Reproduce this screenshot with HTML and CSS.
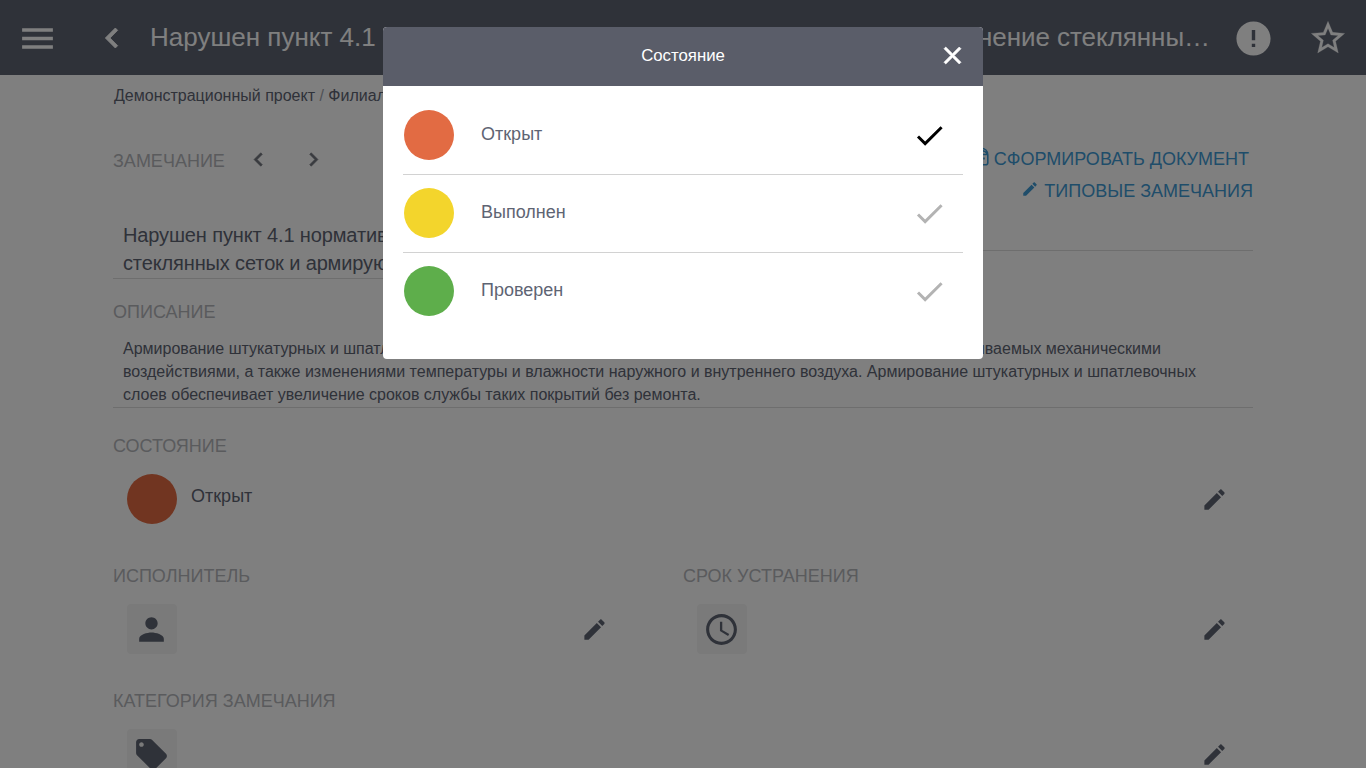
FILE: index.html
```html
<!DOCTYPE html>
<html lang="ru">
<head>
<meta charset="utf-8">
<title>Замечание</title>
<link rel="stylesheet" href="styles.css">
</head>
<body>
<svg class="sprite" aria-hidden="true">
  <symbol id="i-menu" viewBox="0 0 24 24"><path d="M3 18h18v-2H3v2zm0-5h18v-2H3v2zm0-7v2h18V6H3z"/></symbol>
  <symbol id="i-left" viewBox="0 0 24 24"><path d="M15.41 7.41L14 6l-6 6 6 6 1.41-1.41L10.83 12z"/></symbol>
  <symbol id="i-right" viewBox="0 0 24 24"><path d="M10 6L8.59 7.41 13.17 12l-4.58 4.59L10 18l6-6z"/></symbol>
  <symbol id="i-error" viewBox="0 0 24 24"><path d="M12 2C6.48 2 2 6.48 2 12s4.48 10 10 10 10-4.48 10-10S17.52 2 12 2zm1 15h-2v-2h2v2zm0-4h-2V7h2v6z"/></symbol>
  <symbol id="i-star" viewBox="0 0 24 24"><path d="M22 9.24l-7.19-.62L12 2 9.19 8.63 2 9.24l5.46 4.73L5.82 21 12 17.27 18.18 21l-1.63-7.03L22 9.24zM12 15.4l-3.76 2.27 1-4.28-3.32-2.88 4.38-.38L12 6.1l1.71 4.04 4.38.38-3.32 2.88 1 4.28L12 15.4z"/></symbol>
  <symbol id="i-edit" viewBox="0 0 24 24"><path d="M3 17.25V21h3.75L17.81 9.94l-3.75-3.75L3 17.25zM20.71 7.04c.39-.39.39-1.02 0-1.41l-2.34-2.34c-.39-.39-1.02-.39-1.41 0l-1.83 1.83 3.75 3.75 1.83-1.83z"/></symbol>
  <symbol id="i-person" viewBox="0 0 24 24"><path d="M12 12c2.21 0 4-1.79 4-4s-1.79-4-4-4-4 1.79-4 4 1.79 4 4 4zm0 2c-2.67 0-8 1.34-8 4v2h16v-2c0-2.66-5.33-4-8-4z"/></symbol>
  <symbol id="i-clock" viewBox="0 0 24 24"><path d="M11.99 2C6.47 2 2 6.48 2 12s4.47 10 9.99 10C17.52 22 22 17.52 22 12S17.52 2 11.99 2zM12 20c-4.42 0-8-3.58-8-8s3.58-8 8-8 8 3.58 8 8-3.58 8-8 8zm.5-13H11v6l5.25 3.15.75-1.23-4.5-2.67z"/></symbol>
  <symbol id="i-tag" viewBox="0 0 24 24"><path d="M21.41 11.58l-9-9C12.05 2.22 11.55 2 11 2H4c-1.1 0-2 .9-2 2v7c0 .55.22 1.05.59 1.42l9 9c.36.36.86.58 1.41.58s1.05-.22 1.41-.59l7-7c.37-.36.59-.86.59-1.41s-.23-1.06-.59-1.42zM5.5 7C4.67 7 4 6.33 4 5.5S4.67 4 5.5 4 7 4.67 7 5.5 6.33 7 5.5 7z"/></symbol>
  <symbol id="i-close" viewBox="0 0 24 24"><path d="M19 6.41L17.59 5 12 10.59 6.41 5 5 6.41 10.59 12 5 17.59 6.41 19 12 13.41 17.59 19 19 17.59 13.41 12z"/></symbol>
  <symbol id="i-check" viewBox="0 0 24 24"><path d="M9 16.17L4.83 12l-1.42 1.41L9 19 21 7l-1.41-1.41z"/></symbol>
  <symbol id="i-doc" viewBox="0 0 16 20"><path d="M3 1.200H8C12 1.200 14.800 4 14.800 8v7.800a2 2 0 0 1-2 2H3a2 2 0 0 1-2-2V3.200a2 2 0 0 1 2-2zM8.500 3.500Q13 4 14.500 7.500H10M11 10.500v2" fill="none" stroke="currentColor" stroke-width="1.600"/></symbol>
</svg>

<header class="topbar">
  <svg class="icon icon-41 menu"><use href="#i-menu"/></svg>
  <svg class="icon icon-40 bold back"><use href="#i-left"/></svg>
  <h1 class="topbar-title"><span>Нарушен пункт 4.1 нормы</span><span class="title-end">Применение стеклянны…</span></h1>
  <svg class="icon icon-41 alert"><use href="#i-error"/></svg>
  <svg class="icon icon-40 star"><use href="#i-star"/></svg>
</header>

<main class="page">
  <nav class="crumbs">Демонстрационный проект <span class="slash">/</span> Филиал</nav>

  <div class="toolbar">
    <div class="pager">
      <span class="label">ЗАМЕЧАНИЕ</span>
      <svg class="icon icon-27 bold prev"><use href="#i-left"/></svg>
      <svg class="icon icon-27 bold next"><use href="#i-right"/></svg>
    </div>
    <div class="actions">
      <a class="action document"><svg class="icon doc"><use href="#i-doc"/></svg>СФОРМИРОВАТЬ ДОКУМЕНТ</a>
      <a class="action"><svg class="icon icon-18"><use href="#i-edit"/></svg>ТИПОВЫЕ ЗАМЕЧАНИЯ</a>
    </div>
  </div>

  <div class="summary">
    <div class="summary-text">Нарушен пункт 4.1 нормативного документа<br>стеклянных сеток и армирующих</div>
    <div class="summary-side"></div>
  </div>

  <div class="label description-label">ОПИСАНИЕ</div>
  <div class="description">Армирование штукатурных и шпатлевочных слоев<span class="line-end">ываемых механическими</span><br>воздействиями, а также изменениями температуры и влажности наружного и внутреннего воздуха. Армирование штукатурных и шпатлевочных<br>слоев обеспечивает увеличение сроков службы таких покрытий без ремонта.</div>

  <section class="field state">
    <div class="label">СОСТОЯНИЕ</div>
    <div class="field-row">
      <span class="dot dot-open"></span><span class="value">Открыт</span>
      <svg class="icon icon-27 edit"><use href="#i-edit"/></svg>
    </div>
  </section>

  <div class="pair">
    <section class="field">
      <div class="label">ИСПОЛНИТЕЛЬ</div>
      <div class="field-row half">
        <span class="tile"><svg class="icon icon-37"><use href="#i-person"/></svg></span>
        <svg class="icon icon-27 edit"><use href="#i-edit"/></svg>
      </div>
    </section>
    <section class="field">
      <div class="label">СРОК УСТРАНЕНИЯ</div>
      <div class="field-row">
        <span class="tile"><svg class="icon icon-37"><use href="#i-clock"/></svg></span>
        <svg class="icon icon-27 edit"><use href="#i-edit"/></svg>
      </div>
    </section>
  </div>

  <section class="field">
    <div class="label">КАТЕГОРИЯ ЗАМЕЧАНИЯ</div>
    <div class="field-row">
      <span class="tile"><svg class="icon icon-37"><use href="#i-tag"/></svg></span>
      <svg class="icon icon-27 edit"><use href="#i-edit"/></svg>
    </div>
  </section>
</main>

<div class="backdrop">
  <div class="dialog">
    <div class="dialog-head"><span>Состояние</span><svg class="icon close"><use href="#i-close"/></svg></div>
    <div class="options">
      <div class="option"><span class="dot dot-open"></span><span class="option-name">Открыт</span><svg class="icon check selected"><use href="#i-check"/></svg></div>
      <div class="option"><span class="dot dot-done"></span><span class="option-name">Выполнен</span><svg class="icon check"><use href="#i-check"/></svg></div>
      <div class="option"><span class="dot dot-verified"></span><span class="option-name">Проверен</span><svg class="icon check"><use href="#i-check"/></svg></div>
    </div>
  </div>
</div>
</body>
</html>
```
FILE: styles.css
```css
* { box-sizing: border-box; }
html, body { height: 768px; overflow: hidden; }
body { margin: 0; background: #fff; color: #5e6473; font-family: "Liberation Sans", Arial, sans-serif; font-size: 18px; }
.sprite { display: none; }
.icon { display: block; flex: none; fill: currentColor; }
.bold { stroke: currentColor; stroke-width: .5px; }
.icon-18 { width: 18px; height: 18px; }
.icon-27 { width: 27px; height: 27px; }
.icon-37 { width: 37px; height: 37px; }
.icon-40 { width: 40px; height: 40px; }
.icon-41 { width: 41px; height: 41px; }

.topbar { height: 75px; display: flex; align-items: center; background: #5e6473; color: #fff; }
.menu { margin: 2px 0 0 17px; }
.back { margin: 1px 0 0 34px; }
.topbar-title { margin: -2px 0 0 18px; width: 1060px; display: flex; justify-content: space-between; font-size: 26px; font-weight: 400; line-height: 30px; white-space: nowrap; }
.title-end { letter-spacing: -.05px; }
.alert { margin: 1px 0 0 23px; }
.star { margin: 1px 0 0 34px; stroke: currentColor; stroke-width: .15px; }

.page { width: 1140px; margin: 0 auto; }
.crumbs { height: 41px; padding: 12px 0 0 1px; font-size: 16px; line-height: 18px; }
.slash { color: #a0a3ab; }
.label { color: #b4b6bb; font-size: 18px; line-height: 20px; }
.toolbar { height: 105px; display: flex; justify-content: space-between; padding-top: 31px; }
.pager { display: flex; align-items: flex-start; padding-top: 4px; }
.prev { margin: -5px 0 0 20px; color: #73767f; }
.next { margin: -5px 0 0 28px; color: #73767f; }
.actions { display: flex; flex-direction: column; align-items: flex-end; }
.action { display: flex; height: 32px; line-height: 24px; color: #3f9ad4; white-space: nowrap; gap: 5px; }
.action .icon-18 { margin-top: 1px; }
.document { padding-right: 4px; }
.doc { width: 16px; height: 20px; }

.summary { display: flex; height: 58px; }
.summary-text { width: 570px; height: 58px; padding-left: 10px; border-bottom: 1px solid #dcdcdc; font-size: 20px; line-height: 28px; letter-spacing: -.13px; white-space: nowrap; }
.summary-side { flex: 1; height: 30px; border-bottom: 1px solid #dcdcdc; }
.description-label { padding-top: 23px; height: 58px; }
.description { height: 71px; padding: 0 10px; border-bottom: 1px solid #dcdcdc; font-size: 16px; line-height: 23px; white-space: nowrap; }
.line-end { float: right; margin-right: 82px; }

.field { height: 125px; padding-top: 23px; }
.state { height: 135px; padding-top: 28px; }
.pair .field { padding-top: 23px; }
.field-row { display: flex; align-items: center; height: 50px; margin-top: 18px; padding: 0 25.5px 0 14px; }
.half { padding-right: 75.5px; }
.value { margin: -5px 0 0 14px; }
.edit { margin: 1px 0 0 auto; }
.tile { width: 50px; height: 50px; display: flex; align-items: center; padding: 1px 0 0 6px; border-radius: 4px; background: #f4f4f4; }
.pair { display: grid; grid-template-columns: 1fr 1fr; }

.dot { width: 50px; height: 50px; flex: none; border-radius: 50%; }
.dot-open { background: #e26b43; }
.dot-done { background: #f3d52c; }
.dot-verified { background: #5eae4b; }

.backdrop { position: absolute; inset: 0; padding-top: 27px; background: rgba(0,0,0,.5); }
.dialog { width: 600px; height: 332px; margin: 0 auto; overflow: hidden; border-radius: 4px; background: #fff; }
.dialog-head { position: relative; height: 59px; background: #5a5d69; color: #fff; font-size: 16.8px; line-height: 57px; text-align: center; }
.close { position: absolute; top: 14px; right: 16px; width: 29px; height: 29px; stroke: currentColor; stroke-width: .6px; }
.options { padding: 11px 20px 0; }
.option { display: flex; align-items: center; height: 78px; padding: 0 16px 0 1px; border-bottom: 1px solid #d2d2d2; }
.option:last-child { border-bottom-color: transparent; }
.option .dot { margin-top: -2px; }
.option-name { margin: -3px 0 0 27px; }
.check { width: 35px; height: 35px; margin: 0 0 0 auto; color: #b3b3b3; }
.selected { color: #000; }
```
